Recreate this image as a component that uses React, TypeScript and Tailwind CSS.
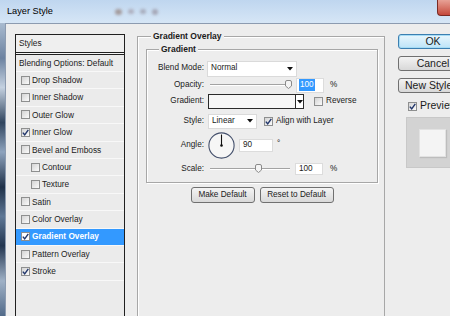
const rows = [
  { label: 'Drop Shadow' },
  { label: 'Inner Shadow' },
  { label: 'Outer Glow' },
  { label: 'Inner Glow', checked: true },
  { label: 'Bevel and Emboss' },
  { label: 'Contour', indent: true },
  { label: 'Texture', indent: true },
  { label: 'Satin' },
  { label: 'Color Overlay' },
  { label: 'Gradient Overlay', checked: true, active: true },
  { label: 'Pattern Overlay' },
  { label: 'Stroke', checked: true },
]

function CheckBox({ checked, light }: { checked?: boolean; light?: boolean }) {
  return (
    <span
      className={
        'flex h-[9px] w-[9px] shrink-0 items-center justify-center border border-[#8e8f8f] ' +
        (light ? 'bg-white' : 'bg-linear-to-br from-[#d4d4d4] to-[#fbfbfb]')
      }
    >
      {checked && (
        <svg width="7" height="7" viewBox="0 0 7 7">
          <path d="M0.8 3.6 L2.7 5.8 L6.3 0.8" fill="none" stroke="#21366b" strokeWidth="1.4" />
        </svg>
      )}
    </span>
  )
}

function Arrow() {
  return (
    <svg width="6" height="4" viewBox="0 0 6 4" className="shrink-0">
      <path d="M0 0 H6 L3 3.5 Z" fill="#111" />
    </svg>
  )
}

function Thumb() {
  return (
    <svg width="7" height="9" viewBox="0 0 7 9">
      <path d="M0.5 2 Q0.5 0.5 2 0.5 H5 Q6.5 0.5 6.5 2 V6 L3.5 8.5 L0.5 6 Z" fill="#f4f4f4" stroke="#8a8a8a" />
    </svg>
  )
}

function TitleBar() {
  return (
    <div className="flex h-[23px] shrink-0 items-center bg-linear-to-b from-[#bfd6ef] to-[#d6e6f6]">
      <span className="ml-[7px] text-[9.2px] text-black">Layer Style</span>
      <span className="ml-[62px] flex items-center gap-[6px] opacity-60">
        <span className="h-[6px] w-[7px] rounded-full bg-[#8a6e62] blur-[1.5px]" />
        <span className="h-[5px] w-[6px] rounded-full bg-[#9a8f9a] blur-[1.5px]" />
        <span className="h-[5px] w-[6px] rounded-full bg-[#8f8a96] blur-[1.5px]" />
        <span className="h-[6px] w-[6px] rounded-full bg-[#8a7f8a] blur-[1.5px]" />
      </span>
      <span className="mb-auto ml-auto h-[16px] w-[13px] rounded-bl-[4px] border-b border-l border-[#7a2a24] bg-linear-to-b from-[#e7a196] to-[#c4473b]" />
    </div>
  )
}

function StyleList() {
  return (
    <div className="ml-[9px] mt-[10px] h-[300px] w-[110px] shrink-0 border border-[#202020] bg-[#ebebeb] text-[8.3px]">
      <div className="flex h-[18px] items-center border-b border-[#202020] bg-[#efefef] pl-[3px]">Styles</div>
      <div className="h-px bg-[#f5f5f5]" />
      <div className="flex h-[18px] items-center border-b border-t border-b-[#f8f8f8] border-t-[#202020] pl-[3px]">
        Blending Options: Default
      </div>
      {rows.map((r) => (
        <div
          key={r.label}
          className={
            'flex h-[17.4px] items-center gap-[2px] border-b border-[#f8f8f8] ' +
            (r.indent ? 'pl-[15px] ' : 'pl-[5px] ') +
            (r.active ? 'bg-[#3399ff] font-bold text-white' : '')
          }
        >
          <CheckBox checked={r.checked} light={r.active} />
          <span>{r.label}</span>
        </div>
      ))}
    </div>
  )
}

function Row({ label, h, children }: { label: string; h: string; children: React.ReactNode }) {
  return (
    <div className={'flex items-center ' + h}>
      <span className="w-[57px] shrink-0 text-right">{label}</span>
      {children}
    </div>
  )
}

function GradientPanel() {
  return (
    <fieldset className="ml-[12px] mt-[7px] h-[320px] w-[248px] shrink-0 border border-[#a7a7a7] text-[8.2px] shadow-[inset_1px_1px_0_#ffffff]">
      <legend className="ml-[13px] bg-[#ededed] px-[2px] text-[8.5px] font-bold leading-[10px]">Gradient Overlay</legend>
      <fieldset className="ml-[8px] mt-[3px] w-[232px] border border-[#a7a7a7] shadow-[inset_1px_1px_0_#ffffff,1px_1px_0_#ffffff]">
        <legend className="ml-[12px] bg-[#ededed] px-[2px] text-[8.5px] font-bold leading-[10px]">Gradient</legend>
        <div className="mt-[6px] flex flex-col pb-[2px]">
          <Row label="Blend Mode:" h="h-[17px]">
            <div className="ml-[3px] flex h-[16px] w-[90px] items-center justify-between border border-[#dadada] bg-white pl-[3px] pr-[3px]">
              <span>Normal</span>
              <Arrow />
            </div>
          </Row>
          <Row label="Opacity:" h="h-[16px]">
            <div className="relative ml-[4px] flex h-[12px] w-[86px] items-center">
              <div className="ml-[2px] h-[2px] w-[80px] border-b border-t border-b-white border-t-[#a3a3a3]" />
              <span className="absolute left-[77px] top-[1px] flex">
                <Thumb />
              </span>
            </div>
            <div className="ml-[2px] flex h-[15px] w-[28px] items-center border border-[#dcdcdc] bg-white pl-[2px]">
              <span className="bg-[#3399ff] px-[1px] text-white">100</span>
            </div>
            <span className="ml-[6px]">%</span>
          </Row>
          <Row label="Gradient:" h="h-[17px]">
            <div className="ml-[4px] flex h-[15px] w-[96px] border border-[#2a2a2a] bg-[#f6f6f6]">
              <div className="flex-1" />
              <div className="flex w-[8px] items-center justify-center border-l border-[#2a2a2a] bg-white">
                <Arrow />
              </div>
            </div>
            <span className="ml-[10px]">
              <CheckBox />
            </span>
            <span className="ml-[3px]">Reverse</span>
          </Row>
          <Row label="Style:" h="h-[22px]">
            <div className="ml-[4px] flex h-[15px] w-[49px] items-center justify-between border border-[#dadada] bg-white pl-[3px] pr-[3px]">
              <span>Linear</span>
              <Arrow />
            </div>
            <span className="ml-[7px]">
              <CheckBox checked />
            </span>
            <span className="ml-[3px]">Align with Layer</span>
          </Row>
          <Row label="Angle:" h="h-[26px]">
            <svg width="27" height="27" viewBox="0 0 27 27" className="ml-[4px] shrink-0">
              <circle cx="13.5" cy="13.5" r="12.6" fill="#f6f6f6" stroke="#44506c" strokeWidth="1.1" />
              <line x1="13.5" y1="13.5" x2="13.5" y2="2.5" stroke="#111" strokeWidth="1.1" />
              <circle cx="13.5" cy="13.5" r="1.3" fill="#111" />
            </svg>
            <div className="ml-[4px] flex h-[13px] w-[34px] items-center border border-[#dcdcdc] bg-white pl-[3px]">90</div>
            <span className="ml-[4px] self-start pt-[6px]">°</span>
          </Row>
          <Row label="Scale:" h="h-[22px]">
            <div className="relative ml-[4px] flex h-[12px] w-[86px] items-center">
              <div className="ml-[2px] h-[2px] w-[80px] border-b border-t border-b-white border-t-[#a3a3a3]" />
              <span className="absolute left-[47px] top-[1px] flex">
                <Thumb />
              </span>
            </div>
            <div className="ml-[1px] flex h-[12px] w-[28px] items-center border border-[#dcdcdc] bg-white pl-[3px]">100</div>
            <span className="ml-[7px]">%</span>
          </Row>
        </div>
      </fieldset>
      <div className="mt-[4px] flex justify-center gap-[5px] pl-[2px]">
        <button className="h-[16px] w-[64px] rounded-[3px] border border-[#707070] bg-linear-to-b from-[#f4f4f4] to-[#d9d9d9] text-[8.2px]">
          Make Default
        </button>
        <button className="h-[16px] w-[74px] rounded-[3px] border border-[#707070] bg-linear-to-b from-[#f4f4f4] to-[#d9d9d9] text-[8.2px]">
          Reset to Default
        </button>
      </div>
    </fieldset>
  )
}

function SideButtons() {
  const gray = 'h-[15px] w-[70px] rounded-[3px] border border-[#707070] bg-linear-to-b from-[#f3f3f3] to-[#d8d8d8] leading-none'
  return (
    <div className="ml-[13px] mt-[10px] flex w-[70px] shrink-0 flex-col text-[10.5px]">
      <div className="flex flex-col gap-[7px]">
        <button className="h-[15px] w-[70px] rounded-[3px] border border-[#3c7fb1] bg-linear-to-b from-[#e9f6fd] to-[#bde4f8] leading-none shadow-[inset_0_0_0_1px_#a6dcf5]">
          OK
        </button>
        <button className={gray}>Cancel</button>
        <button className={gray + ' whitespace-nowrap'}>New Style...</button>
      </div>
      <div className="mt-[7px] flex h-[12px] items-center pl-[10px]">
        <CheckBox checked />
        <span className="ml-[3px]">Preview</span>
      </div>
      <div className="ml-[8px] mt-[5px] flex h-[51px] w-[52px] shrink-0 items-center justify-center border border-[#c8c8c8] bg-[#d3d3d3]">
        <div className="h-[28px] w-[27px] border border-[#e2e2e2] bg-[#f4f4f4] shadow-[1px_1px_1px_#bdbdbd]" />
      </div>
    </div>
  )
}

export default function App() {
  return (
    <div className="flex h-[316px] w-[450px] flex-col overflow-hidden bg-[#ededed] font-['Liberation_Sans',Arial,sans-serif] text-[#1b1b1b]">
      <TitleBar />
      <div className="flex min-h-0 flex-1">
        <div className="w-[5px] shrink-0 bg-[linear-gradient(180deg,#a9bbd0_0%,#6c82a0_12%,#c4d1e0_22%,#30455f_34%,#8ea3bd_44%,#1f3149_56%,#5f7896_66%,#233650_76%,#9fb1c6_88%,#516a89_100%)]" />
        <div className="flex min-w-0 flex-1 items-start overflow-hidden border-l border-t border-[#8c9bb0] bg-[#ededed]">
          <StyleList />
          <GradientPanel />
          <SideButtons />
        </div>
      </div>
    </div>
  )
}
